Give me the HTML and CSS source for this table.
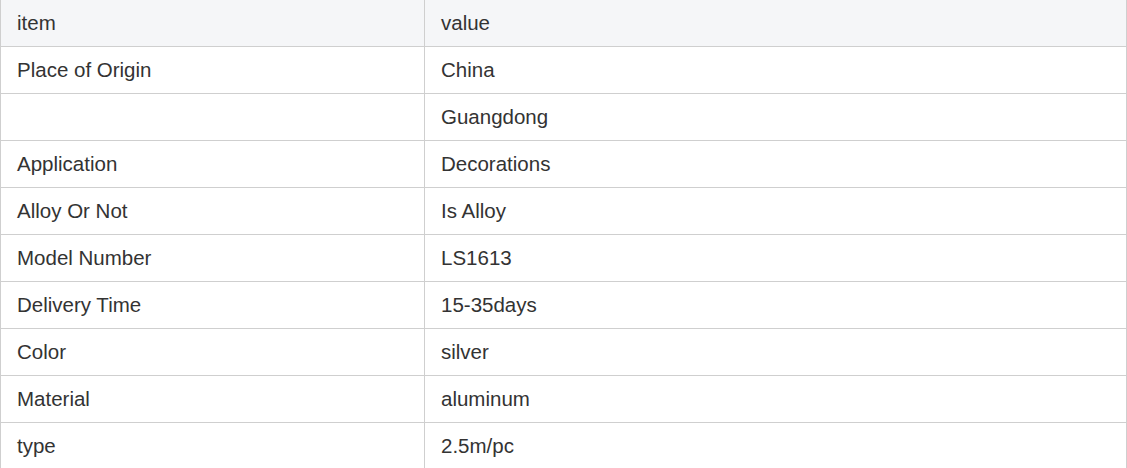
FILE: index.html
```html
<!DOCTYPE html>
<html>
<head>
<meta charset="utf-8">
<link rel="stylesheet" href="styles.css">
</head>
<body>
<table class="spec">
  <colgroup><col class="c1"><col class="c2"></colgroup>
  <thead>
    <tr><th>item</th><th>value</th></tr>
  </thead>
  <tbody>
    <tr><td>Place of Origin</td><td>China</td></tr>
    <tr><td></td><td>Guangdong</td></tr>
    <tr><td>Application</td><td>Decorations</td></tr>
    <tr><td>Alloy Or Not</td><td>Is Alloy</td></tr>
    <tr><td>Model Number</td><td>LS1613</td></tr>
    <tr><td>Delivery Time</td><td>15-35days</td></tr>
    <tr><td>Color</td><td>silver</td></tr>
    <tr><td>Material</td><td>aluminum</td></tr>
    <tr><td>type</td><td>2.5m/pc</td></tr>
  </tbody>
</table>
</body>
</html>
```
FILE: styles.css
```css
html, body {
  margin: 0;
  padding: 0;
  background: #ffffff;
}
.spec {
  width: 1126px;
  border-collapse: collapse;
  table-layout: fixed;
  font-family: "Liberation Sans", Arial, sans-serif;
  font-size: 20.5px;
  color: #333333;
}
.c1 { width: 424px; }
.c2 { width: 702px; }
.spec th,
.spec td {
  height: 46px;
  padding: 0 16px;
  text-align: left;
  font-weight: normal;
  vertical-align: middle;
  border-left: 1px solid #cfcfcf;
  border-right: 1px solid #cfcfcf;
  border-bottom: 1px solid #cfcfcf;
  white-space: nowrap;
}
.spec thead th {
  background: #f5f6f8;
}
```
